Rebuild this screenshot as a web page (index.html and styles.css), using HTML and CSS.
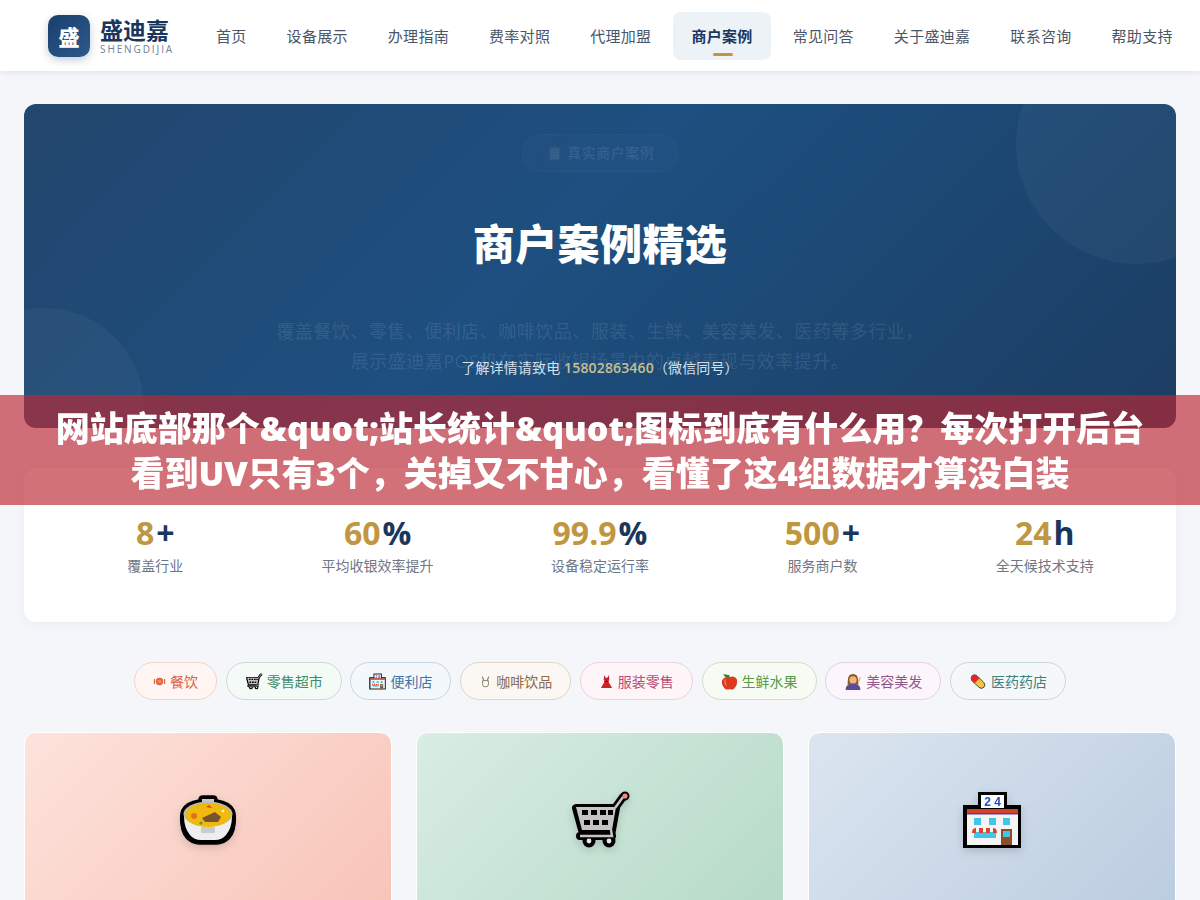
FILE: index.html
```html
<!DOCTYPE html>
<html lang="zh-CN">
<head>
    <meta charset="UTF-8">
    <meta name="viewport" content="width=device-width, initial-scale=1.0">
    <title>商户案例 - 盛迪嘉</title>
    <link rel="stylesheet" href="styles.css">
</head>
<body>
    <svg class="sprite" xmlns="http://www.w3.org/2000/svg">
        <symbol id="i-bowl" viewBox="0 0 60 60">
            <path d="M21 10 Q21 6 25 6 H35 Q39 6 39 10 Q52 12 56 20 Q58 25 57 34 Q56 46 48 51 Q44 54 38 54 H22 Q16 54 12 51 Q4 46 3 34 Q2 25 4 20 Q8 12 21 10Z" fill="#000" stroke="#000" stroke-width="1.5"/>
            <path d="M6 26 Q6 38 12 45 Q16 50 23 50 H37 Q44 50 48 45 Q54 38 54 26Z" fill="#eceef0"/>
            <rect x="24" y="9" width="12" height="6" fill="#c4c6c8"/>
            <ellipse cx="30" cy="24" rx="24.5" ry="12.5" fill="#b8babc"/>
            <ellipse cx="30" cy="25" rx="23" ry="12" fill="#f0b90f"/>
            <rect x="23" y="37" width="14" height="6" fill="#c9cbcd"/>
            <path d="M24 28 L37 22 L43 27 L40 32 L27 32Z" fill="#7a5230"/>
            <circle cx="16" cy="26" r="3" fill="#e0701c"/>
            <path d="M28 17 L31 15 L34 18Z" fill="#d9401e"/>
            <circle cx="23" cy="33" r="1.6" fill="#5aa02c"/>
            <circle cx="45" cy="21" r="1.4" fill="#fff2a8"/>
        </symbol>
        <symbol id="i-cart" viewBox="0 0 60 60">
            <g fill="none" stroke="#000" stroke-linejoin="round" stroke-linecap="round">
                <path d="M6 18 H46 L42 40 H12Z" fill="#000" stroke-width="8"/>
                <path d="M45 18 L53 7 M41 40 L42 46 H10" stroke-width="8"/>
                <circle cx="55" cy="6" r="2" stroke-width="5"/>
                <circle cx="19" cy="51" r="3" stroke-width="7"/>
                <circle cx="39" cy="51" r="3" stroke-width="7"/>
            </g>
            <path d="M6 17 H46 L42 40 H12Z" fill="#c4c4c4"/>
            <path d="M45 18 L53 7 M41 40 L42 46 H10" fill="none" stroke="#c4c4c4" stroke-width="2.5"/>
            <path d="M12 20h6v5h-6zM21 20h6v5h-6zM30 20h6v5h-6zM38 20h5v5h-5zM14 30h6v5h-6zM23 30h6v5h-6zM32 30h6v5h-6z" fill="#000"/>
            <circle cx="55" cy="6" r="2.6" fill="#f08a8a"/>
            <circle cx="19" cy="51" r="2.4" fill="#e6e6e6"/>
            <circle cx="39" cy="51" r="2.4" fill="#e6e6e6"/>
        </symbol>
        <symbol id="i-store" viewBox="0 0 60 60">
            <rect x="16" y="2" width="29" height="16" fill="#000"/>
            <rect x="1" y="15" width="58" height="43" fill="#000"/>
            <rect x="19" y="5" width="23" height="13" fill="#fff"/>
            <text class="store-num" x="30.5" y="16" text-anchor="middle">2 4</text>
            <rect x="5" y="19" width="51" height="36" fill="#f5f5f5"/>
            <rect x="5" y="19" width="51" height="4" fill="#d0432c"/>
            <rect x="5" y="23" width="51" height="1.5" fill="#5a3fa0"/>
            <path d="M12 28h7v7h-7zM27 28h7v7h-7zM41 28h7v7h-7z" fill="#44c4ea"/>
            <rect x="12" y="42" width="22" height="6" fill="#44c4ea"/>
            <path d="M10 43 Q10 38 14 38 V43Z M17 38 H21 V43 H17Z M24 38 H28 V43 H24Z M31 38 Q35 38 35 43 H31Z" fill="#d8452c"/>
            <rect x="39" y="39" width="11" height="16" fill="#8a4f28"/>
            <rect x="41" y="41" width="7" height="6" fill="#44c4ea"/>
        </symbol>
        <symbol id="i-plate" viewBox="0 0 16 16">
            <circle cx="8" cy="8" r="4.5" fill="#e0603c"/>
            <circle cx="8" cy="8" r="2.6" fill="#ef8a6c"/>
            <rect x="1" y="5" width="1.5" height="6" fill="#e0603c"/>
            <rect x="13.5" y="5" width="1.5" height="6" fill="#e0603c"/>
        </symbol>
        <symbol id="i-cup" viewBox="0 0 16 16">
            <path d="M4 2 L6 7 M12 2 L10 7" stroke="#8a7a60" stroke-width="1.4" fill="none"/>
            <path d="M4.5 7 H11.5 V12 Q11.5 14.5 8 14.5 Q4.5 14.5 4.5 12Z" fill="#fff" stroke="#8a7a60" stroke-width="1.2"/>
        </symbol>
        <symbol id="i-dress" viewBox="0 0 16 16">
            <path d="M5.5 1 L7 4 H9 L10.5 1 L11 6 L10 8 L14 15 H2 L6 8 L5 6Z" fill="#c8242c"/>
            <path d="M6 8 H10" stroke="#5c1014" stroke-width="1"/>
        </symbol>
        <symbol id="i-apple" viewBox="0 0 16 16">
            <path d="M2 1 L8 2 L8 5 Q4 5 2 1Z" fill="#3f7a2a"/>
            <path d="M8 4 Q13 2 15 6 Q16 11 12 15 Q10 16 8 15 Q6 16 4 15 Q0 11 1 7 Q3 3 8 4Z" fill="#dc3a1e"/>
            <path d="M4 6 Q3 9 5 12" stroke="#f08a5a" stroke-width="1" fill="none"/>
        </symbol>
        <symbol id="i-woman" viewBox="0 0 16 16">
            <path d="M3 8 Q3 1 8 1 Q13 1 13 8 V11 H3Z" fill="#8a5a28"/>
            <circle cx="8" cy="6.5" r="3.4" fill="#f0b878"/>
            <path d="M1 16 Q1 10 8 10 Q15 10 15 16Z" fill="#5c4a9c"/>
            <path d="M13 9 L15 4" stroke="#f0b878" stroke-width="1.4"/>
        </symbol>
        <symbol id="i-pill" viewBox="0 0 16 16">
            <path d="M2.5 2.5 Q5 0.5 7.5 3 L13.5 9 Q15.5 11.5 13.5 13.5 Q11 15.5 9 13.5 L2.5 7.5 Q0.5 5 2.5 2.5Z" fill="#f5c542" stroke="#2a2a2a" stroke-width=".8"/>
            <path d="M2.5 2.5 Q5 0.5 7.5 3 L9.5 5 L5 9.5 L2.5 7.5 Q0.5 5 2.5 2.5Z" fill="#e0282e"/>
        </symbol>
    </svg>

    <header class="site-header">
        <a class="logo" href="#">
            <span class="logo-mark">盛</span>
            <span class="logo-text">
                <span class="logo-name">盛迪嘉</span>
                <span class="logo-sub">SHENGDIJIA</span>
            </span>
        </a>
        <nav class="nav">
            <a href="#">首页</a>
            <a href="#">设备展示</a>
            <a href="#">办理指南</a>
            <a href="#">费率对照</a>
            <a href="#">代理加盟</a>
            <a href="#" class="active">商户案例</a>
            <a href="#">常见问答</a>
            <a href="#">关于盛迪嘉</a>
            <a href="#">联系咨询</a>
            <a href="#">帮助支持</a>
        </nav>
    </header>

    <main class="page">
        <section class="hero">
            <div class="hero-badge">📋 真实商户案例</div>
            <h1 class="hero-title">商户案例精选</h1>
            <p class="hero-desc">覆盖餐饮、零售、便利店、咖啡饮品、服装、生鲜、美容美发、医药等多行业，<br>展示盛迪嘉POS机在实际收银场景中的卓越表现与效率提升。</p>
            <div class="hero-phone">了解详情请致电 <b>15802863460</b>（微信同号）</div>
        </section>

        <section class="stats">
            <div class="stat"><div class="stat-num">8<span>+</span></div><div class="stat-label">覆盖行业</div></div>
            <div class="stat"><div class="stat-num">60<span>%</span></div><div class="stat-label">平均收银效率提升</div></div>
            <div class="stat"><div class="stat-num">99.9<span>%</span></div><div class="stat-label">设备稳定运行率</div></div>
            <div class="stat"><div class="stat-num">500<span>+</span></div><div class="stat-label">服务商户数</div></div>
            <div class="stat"><div class="stat-num">24<span>h</span></div><div class="stat-label">全天候技术支持</div></div>
        </section>

        <div class="chips">
            <a class="chip chip-food" href="#"><svg class="chip-icon"><use href="#i-plate"/></svg>餐饮</a>
            <a class="chip chip-retail" href="#"><svg class="chip-icon"><use href="#i-cart"/></svg>零售超市</a>
            <a class="chip chip-store" href="#"><svg class="chip-icon"><use href="#i-store"/></svg>便利店</a>
            <a class="chip chip-coffee" href="#"><svg class="chip-icon"><use href="#i-cup"/></svg>咖啡饮品</a>
            <a class="chip chip-cloth" href="#"><svg class="chip-icon"><use href="#i-dress"/></svg>服装零售</a>
            <a class="chip chip-fresh" href="#"><svg class="chip-icon"><use href="#i-apple"/></svg>生鲜水果</a>
            <a class="chip chip-beauty" href="#"><svg class="chip-icon"><use href="#i-woman"/></svg>美容美发</a>
            <a class="chip chip-med" href="#"><svg class="chip-icon"><use href="#i-pill"/></svg>医药药店</a>
        </div>

        <section class="cases">
            <article class="case case-food"><svg class="case-icon"><use href="#i-bowl"/></svg></article>
            <article class="case case-retail"><svg class="case-icon"><use href="#i-cart"/></svg></article>
            <article class="case case-store"><svg class="case-icon"><use href="#i-store"/></svg></article>
        </section>
    </main>

    <div class="banner">网站底部那个&amp;quot;站长统计&amp;quot;图标到底有什么用？每次打开后台看到UV只有3个，关掉又不甘心，看懂了这4组数据才算没白装</div>
</body>
</html>
```

FILE: styles.css
```css
* {
    box-sizing: border-box;
}

html, body {
    height: 900px;
    overflow: hidden;
}

body {
    margin: 0;
    background-color: #f4f6fa;
    color: #1a365d;
    font-family: "Open Sans", "Noto Sans CJK SC", sans-serif;
}

a {
    text-decoration: none;
    color: inherit;
}

.sprite {
    display: none;
}

.store-num {
    font: bold 12px "Liberation Sans", sans-serif;
    fill: #1f4fc0;
}

/* header */
.site-header {
    display: flex;
    align-items: center;
    gap: 24px;
    height: 71px;
    padding: 1px 0 0 48px;
    background-color: #fff;
    box-shadow: 0 1px 6px rgba(26, 54, 93, 0.1);
}

.logo {
    display: flex;
    align-items: center;
    gap: 10px;
    width: 126px;
    flex: none;
}

.logo-mark {
    display: flex;
    align-items: center;
    justify-content: center;
    width: 42px;
    height: 42px;
    flex: none;
    border-radius: 10px;
    background: linear-gradient(135deg, #1a3f6b, #2c5a8c);
    box-shadow: 0 3px 8px rgba(26, 54, 93, 0.25);
    color: #fff;
    font-size: 21px;
    font-weight: 900;
}

.logo-text {
    display: flex;
    flex-direction: column;
}

.logo-name {
    font-size: 23px;
    font-weight: 700;
    line-height: 26px;
    color: #1a365d;
}

.logo-sub {
    font-size: 10px;
    line-height: 13px;
    letter-spacing: 1.9px;
    color: #718096;
}

.nav {
    display: flex;
    gap: 4px;
}

.nav a {
    position: relative;
    padding: 0 18px;
    line-height: 48px;
    border-radius: 8px;
    font-size: 15px;
    letter-spacing: 0.3px;
    color: #4a5568;
}

.nav a.active {
    background-color: #edf2f7;
    color: #1a365d;
    font-weight: 600;
}

.nav a.active::after {
    content: "";
    position: absolute;
    left: 50%;
    bottom: 4px;
    width: 20px;
    height: 3px;
    margin-left: -9px;
    border-radius: 2px;
    background-color: #c09640;
}

/* page */
.page {
    padding: 33px 24px 0;
}

.hero {
    position: relative;
    overflow: hidden;
    height: 324px;
    padding-top: 30px;
    border-radius: 12px;
    background: linear-gradient(135deg, #23466d 0%, #1d4f80 45%, #1c4670 75%, #1c3d63 100%);
    text-align: center;
}

.hero::before, .hero::after {
    content: "";
    position: absolute;
    border-radius: 50%;
    background-color: rgba(255, 255, 255, 0.04);
}

.hero::before {
    top: -80px;
    right: -80px;
    width: 240px;
    height: 240px;
}

.hero::after {
    bottom: -80px;
    left: -80px;
    width: 200px;
    height: 200px;
}

.hero-badge {
    width: 156px;
    height: 38px;
    margin: 0 auto;
    border: 1px solid rgba(255, 255, 255, 0.03);
    border-radius: 19px;
    background-color: rgba(255, 255, 255, 0.015);
    font-size: 14px;
    line-height: 36px;
    letter-spacing: 0.5px;
    color: rgba(255, 255, 255, 0.09);
    font-weight: 600;
}

.hero-title {
    margin: 43px 0 43px;
    font-size: 42px;
    font-weight: 900;
    line-height: 58px;
    letter-spacing: 0.4px;
    color: #fff;
}

.hero-desc {
    margin: 0;
    font-size: 18px;
    line-height: 30px;
    letter-spacing: 0.5px;
    color: rgba(255, 255, 255, 0.11);
}

.hero-phone {
    position: absolute;
    left: 0;
    right: 0;
    bottom: 49px;
    font-size: 14px;
    line-height: 22px;
    letter-spacing: 0.15px;
    color: #d5e0ec;
}

.hero-phone b {
    font-weight: 600;
    color: #c9c08f;
}

.stats {
    display: grid;
    grid-template-columns: repeat(5, 1fr);
    margin-top: 40px;
    padding: 46px 20px 45px;
    border-radius: 12px;
    background-color: #fff;
    box-shadow: 0 2px 10px rgba(26, 54, 93, 0.05);
    text-align: center;
}

.stat-num {
    font-size: 32px;
    font-weight: 700;
    line-height: 38px;
    color: #c09640;
}

.stat-num span {
    margin-left: 2px;
    color: #1a365d;
}

.stat-label {
    margin-top: 3px;
    font-size: 14px;
    line-height: 22px;
    color: #6f7784;
}

/* chips */
.chips {
    display: flex;
    justify-content: center;
    gap: 8.7px;
    margin-top: 40px;
}

.chip {
    display: flex;
    align-items: center;
    gap: 4px;
    height: 38px;
    padding: 0 18px;
    border: 1px solid;
    border-radius: 19px;
    font-size: 14px;
}

.chip-icon {
    width: 18px;
    height: 17px;
    flex: none;
}

.chip-food .chip-icon, .chip-coffee .chip-icon { width: 13px; }
.chip-cloth .chip-icon { width: 15px; }
.chip-store .chip-icon, .chip-fresh .chip-icon { width: 17px; }

.chip-food { color: #d9634a; border-color: #f3d3cc; background-color: #fff6f3; }
.chip-retail { color: #3f8a68; border-color: #ccdcd4; background-color: #f4faf6; }
.chip-store { color: #3f74a8; border-color: #c6d5e2; background-color: #f3f8fc; }
.chip-coffee { color: #8a6a48; border-color: #e0d5ca; background-color: #fbf7f3; }
.chip-cloth { color: #b84a72; border-color: #eed2dc; background-color: #fef5f8; }
.chip-fresh { color: #5a9a48; border-color: #cfdfca; background-color: #f6fbf3; }
.chip-beauty { color: #93558f; border-color: #e2d2e2; background-color: #fcf5fb; }
.chip-med { color: #3f8080; border-color: #c8d8d8; background-color: #f4f8f8; }

/* cases */
.cases {
    display: grid;
    grid-template-columns: repeat(3, 1fr);
    gap: 24px;
    margin-top: 32px;
}

.case {
    display: flex;
    align-items: center;
    justify-content: center;
    height: 175px;
    border: 1px solid #fff;
    border-radius: 12px 12px 0 0;
}

.case-icon {
    width: 60px;
    height: 60px;
    filter: drop-shadow(0 3px 4px rgba(0, 0, 0, 0.15));
}

.case-food { background: linear-gradient(135deg, #fde3dc, #f8c4b8); }
.case-retail { background: linear-gradient(135deg, #d9ede3, #b6dac8); }
.case-store { background: linear-gradient(135deg, #dbe5f0, #bccde0); }

/* overlay strip */
.banner {
    position: fixed;
    top: 395px;
    left: 0;
    width: 100%;
    height: 110px;
    padding: 11px 50px;
    background-color: rgba(188, 39, 50, 0.66);
    color: #fff;
    font-size: 34px;
    font-weight: 900;
    line-height: 45px;
    text-align: center;
}
```
